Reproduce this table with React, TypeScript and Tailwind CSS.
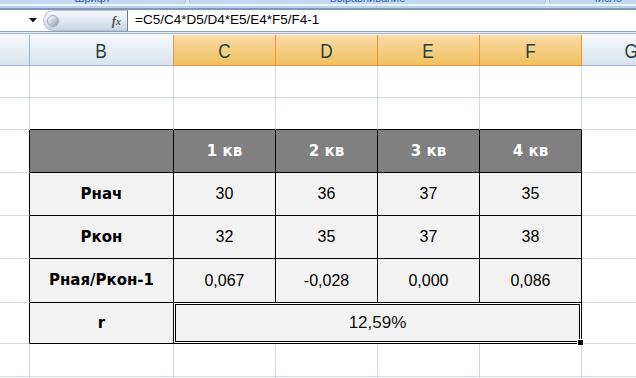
import React from 'react';

const cols = ['w-[30px]', 'w-[144px]', 'w-[102px]', 'w-[102px]', 'w-[102px]', 'w-[102px]'];

const labelFont = "font-['DejaVu_Sans',sans-serif] font-bold text-[15px]";
const numFont = "font-['Liberation_Sans',Arial,sans-serif] text-[16px]";

function ColHeader({ w, label, selected, rightOrange }: { w: string; label: string; selected?: boolean; rightOrange?: boolean }) {
    const bg = selected
        ? 'bg-gradient-to-b from-[#f9dba5] to-[#f1c15e] border-b-[#f29536]'
        : 'bg-gradient-to-b from-[#f6f9fc] to-[#d9e2ec] border-b-[#9eb6ce]';
    const right = selected || rightOrange ? 'border-r-[#f29536]' : 'border-r-[#9eb6ce]';
    return (
        <div className={`${w} h-[31px] shrink-0 border-b border-r ${bg} ${right} flex items-center justify-center pt-[2px]`}>
            <span className="inline-block scale-x-[0.82] font-['Liberation_Sans',Arial,sans-serif] text-[21px] text-[#27413e]">{label}</span>
        </div>
    );
}

function GridRow({ h, children }: { h: string; children: React.ReactNode }) {
    return <div className={`flex ${h}`}>{children}</div>;
}

function Cell({ w, className = '', children }: { w: string; className?: string; children?: React.ReactNode }) {
    return (
        <div className={`${w} shrink-0 h-full border-r border-b flex items-center justify-center ${className}`}>
            {children}
        </div>
    );
}

const data = [
    { label: 'Рнач', values: ['30', '36', '37', '35'], h: 'h-[43px]' },
    { label: 'Ркон', values: ['32', '35', '37', '38'], h: 'h-[43px]' },
    { label: 'Рная/Ркон-1', values: ['0,067', '-0,028', '0,000', '0,086'], h: 'h-[44px]' },
];

export default function App() {
    return (
        <div className="w-[636px] h-[378px] overflow-hidden bg-white select-none">
            {/* Ribbon bottom strip */}
            <div className="flex h-[4px] bg-[#dce8f6]">
                <div className="w-[186px] h-[4px] overflow-hidden bg-[#c3d8f1] rounded-br-[3px] border-r border-[#a5c0e0] flex justify-center">
                    <span className="-mt-[7px] block text-[11px] leading-[11px] text-[#3a65a8] font-['Liberation_Sans',Arial,sans-serif]">Шрифт</span>
                </div>
                <div className="w-[3px]" />
                <div className="w-[357px] h-[4px] overflow-hidden bg-[#c3d8f1] rounded-b-[3px] border-x border-[#a5c0e0] flex justify-center">
                    <span className="-mt-[7px] block text-[11px] leading-[11px] text-[#3a65a8] font-['Liberation_Sans',Arial,sans-serif]">Выравнивание</span>
                </div>
                <div className="w-[3px]" />
                <div className="flex-1 h-[4px] overflow-hidden bg-[#c3d8f1] rounded-bl-[3px] border-l border-[#a5c0e0] flex justify-end pr-[14px]">
                    <span className="-mt-[7px] block text-[11px] leading-[11px] text-[#3a65a8] font-['Liberation_Sans',Arial,sans-serif]">Число</span>
                </div>
            </div>
            <div className="h-[2px] bg-[#e8f4fc]" />
            <div className="h-[2px] bg-[#bcd0e8]" />
            <div className="h-[2px] bg-[#8099ba]" />

            {/* Formula bar */}
            <div className="flex h-[21px] bg-white">
                <div className="w-[43px] h-full flex items-center justify-end pr-[6px]">
                    <svg width="8" height="5" viewBox="0 0 8 5">
                        <path d="M0 0 H8 L4 4.5 Z" fill="#111" />
                    </svg>
                </div>
                <div className="w-[84px] h-full rounded-l-full border border-r-0 border-[#b5c3d4] bg-gradient-to-b from-[#f7f9fc] via-[#e3eaf3] to-[#c9d5e4] flex items-center justify-between pl-[3px] pr-[6px]">
                    <div className="w-[12px] h-[12px] rounded-full bg-gradient-to-br from-[#ffffff] via-[#c9cfd7] to-[#8d98a6] border border-[#a3adba]" />
                    <span className="font-['Liberation_Serif',serif] italic font-bold text-[13px] text-[#555] leading-none">
                        f<span className="text-[10px]">x</span>
                    </span>
                </div>
                <div className="flex-1 h-full border-l border-[#6f7f94] flex items-center pl-[7px]">
                    <span className="font-['Liberation_Sans',Arial,sans-serif] text-[13.5px] text-black">=C5/C4*D5/D4*E5/E4*F5/F4-1</span>
                </div>
            </div>
            <div className="h-[1px] bg-[#8aa0bd]" />
            <div className="h-[1px] bg-[#e6edf5]" />
            <div className="h-[1px] bg-[#a3b5cb]" />
            <div className="h-[1px] bg-[#f1f5f9]" />

            {/* Column headers */}
            <div className="flex">
                <ColHeader w={cols[0]} label="" />
                <ColHeader w={cols[1]} label="B" rightOrange />
                <ColHeader w={cols[2]} label="C" selected />
                <ColHeader w={cols[3]} label="D" selected />
                <ColHeader w={cols[4]} label="E" selected />
                <ColHeader w={cols[5]} label="F" selected />
                <div className="flex-1 h-[31px] border-b border-[#9eb6ce] bg-gradient-to-b from-[#f6f9fc] to-[#d9e2ec] flex items-center pl-[41px] pt-[2px]">
                    <span className="inline-block scale-x-[0.82] font-['Liberation_Sans',Arial,sans-serif] text-[21px] text-[#27413e]">G</span>
                </div>
            </div>

            {/* Row 1 */}
            <GridRow h="h-[32px]">
                {cols.map((w, i) => (
                    <Cell key={i} w={w} className="border-[#d0d7e5]" />
                ))}
                <div className="flex-1 h-full border-b border-[#d0d7e5]" />
            </GridRow>

            {/* Row 2 — bottom edge is the table's top border */}
            <GridRow h="h-[32px]">
                <Cell w={cols[0]} className="border-[#d0d7e5]" />
                {cols.slice(1).map((w, i) => (
                    <Cell key={i} w={w} className="border-r-[#d0d7e5] border-b-black" />
                ))}
                <div className="flex-1 h-full border-b border-[#d0d7e5]" />
            </GridRow>

            {/* Table header */}
            <GridRow h="h-[43px]">
                <Cell w={cols[0]} className="border-r-black border-b-[#d0d7e5]" />
                <Cell w={cols[1]} className="border-black bg-[#808080]" />
                {['1 кв', '2 кв', '3 кв', '4 кв'].map((t, i) => (
                    <Cell key={t} w={cols[i + 2]} className="border-black bg-[#808080]">
                        <span className={`${labelFont} text-white`}>{t}</span>
                    </Cell>
                ))}
                <div className="flex-1 h-full border-b border-[#d0d7e5]" />
            </GridRow>

            {/* Data rows */}
            {data.map((row) => (
                <GridRow key={row.label} h={row.h}>
                    <Cell w={cols[0]} className="border-r-black border-b-[#d0d7e5]" />
                    <Cell w={cols[1]} className="border-black bg-[#f2f2f2]">
                        <span className={`${labelFont} text-black`}>{row.label}</span>
                    </Cell>
                    {row.values.map((v, i) => (
                        <Cell key={i} w={cols[i + 2]} className="border-black bg-[#f2f2f2]">
                            <span className={`${numFont} text-black`}>{v}</span>
                        </Cell>
                    ))}
                    <div className="flex-1 h-full border-b border-[#d0d7e5]" />
                </GridRow>
            ))}

            {/* r row with merged, selected cell */}
            <GridRow h="h-[41px]">
                <Cell w={cols[0]} className="border-r-black border-b-[#d0d7e5]" />
                <Cell w={cols[1]} className="border-black bg-[#f2f2f2]">
                    <span className={`${labelFont} text-black`}>r</span>
                </Cell>
                <div className="relative w-[408px] shrink-0 h-full border-r border-b border-black bg-[#f2f2f2] shadow-[inset_0_0_0_1px_#ffffff,inset_0_0_0_2px_#000000] flex items-center justify-center">
                    <span className="font-['Liberation_Sans',Arial,sans-serif] text-[17px] text-[#111]">12,59%</span>
                    <div className="absolute right-[-3px] bottom-[-3px] w-[5px] h-[5px] bg-black border border-white box-content" />
                </div>
                <div className="flex-1 h-full border-b border-[#d0d7e5]" />
            </GridRow>

            {/* Row 8 */}
            <GridRow h="h-[33px]">
                {cols.map((w, i) => (
                    <Cell key={i} w={w} className="border-[#d0d7e5]" />
                ))}
                <div className="flex-1 h-full border-b border-[#d0d7e5]" />
            </GridRow>

            {/* Row 9 (partial) */}
            <GridRow h="h-[20px]">
                {cols.map((w, i) => (
                    <Cell key={i} w={w} className="border-[#d0d7e5]" />
                ))}
                <div className="flex-1 h-full" />
            </GridRow>
        </div>
    );
}
